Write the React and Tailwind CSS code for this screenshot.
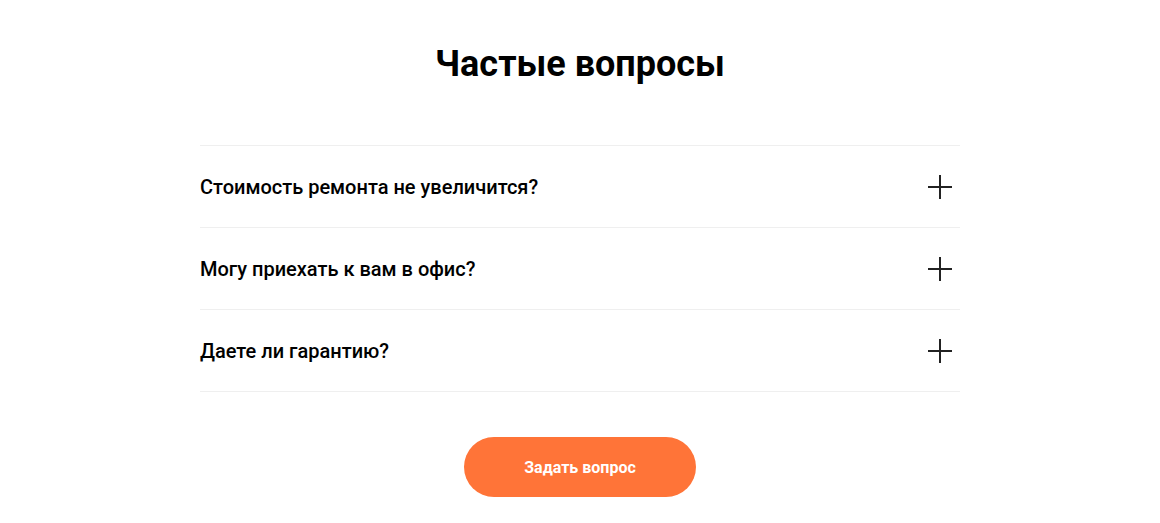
import React from 'react';

const questions = [
  'Стоимость ремонта не увеличится?',
  'Могу приехать к вам в офис?',
  'Даете ли гарантию?',
];

const PlusIcon = () => (
  <svg width="24" height="24" viewBox="0 0 24 24" fill="none">
    <path d="M12 0V24M0 12H24" stroke="#222" strokeWidth="2" />
  </svg>
);

const App = () => {
  return (
    <div className="bg-white min-h-[523px] pt-[42px] text-black" style={{ fontFamily: 'Roboto, sans-serif' }}>
      <h2 className="text-center text-[36px] leading-[44px] font-bold">Частые вопросы</h2>
      <div className="w-[760px] mx-auto mt-[59px] border-t border-[#efefef]">
        {questions.map((q) => (
          <div key={q} className="h-[82px] flex items-center justify-between border-b border-[#efefef] pr-2">
            <span className="text-[20px] leading-[24px] font-medium">{q}</span>
            <PlusIcon />
          </div>
        ))}
      </div>
      <div className="flex justify-center mt-[45px]">
        <button className="w-[232px] h-[60px] rounded-full bg-[#ff7438] text-white text-[16px] font-bold pt-px">
          Задать вопрос
        </button>
      </div>
    </div>
  );
};

export default App;
